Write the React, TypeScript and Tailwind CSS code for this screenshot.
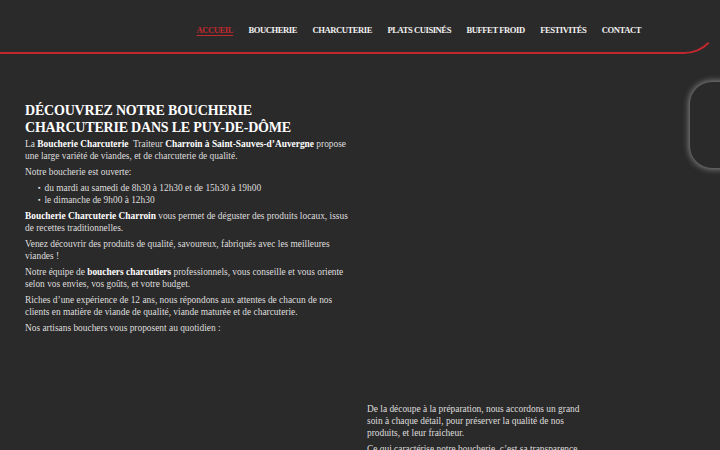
const navItems = [
  "ACCUEIL",
  "BOUCHERIE",
  "CHARCUTERIE",
  "PLATS CUISINÉS",
  "BUFFET FROID",
  "FESTIVITÉS",
  "CONTACT",
];

function Header() {
  return (
    <header className="h-[54px] w-full rounded-br-[36px] border-b-2 border-r-2 border-b-[#c1272d] border-r-transparent bg-[#2b2a2a]">
      <nav className="flex h-full items-center justify-end gap-[15.5px] pr-[77px] pt-[8px]">
        {navItems.map((item, i) => (
          <a
            key={item}
            href="#"
            className={
              i === 0
                ? "text-[8.6px] font-bold tracking-[-0.45px] text-[#c1272d] underline underline-offset-2"
                : "text-[8.6px] font-bold tracking-[-0.45px] text-[#f2f2f2]"
            }
          >
            {item}
          </a>
        ))}
      </nav>
    </header>
  );
}

export default function App() {
  return (
    <div
      className="relative h-[450px] w-[720px] overflow-hidden bg-[#2b2a2a] text-[9.4px] leading-[12px] text-[#dedede]"
      style={{ fontFamily: '"Liberation Serif", "DejaVu Serif", serif' }}
    >
      <Header />

      {/* decorative floating box at the right edge */}
      <div className="absolute right-[-30px] top-[82px] h-[86px] w-[60px] rounded-[22px] bg-[#2b2a2a] shadow-[0_0_6px_1px_rgba(200,200,200,0.6)]" />

      <main className="flex gap-[12px] px-[25px] pt-[49px]">
        <section className="flex w-[330px] flex-col gap-[4px]">
          <h1 className="mb-[-2px] text-[14px] font-bold leading-[16.5px] tracking-[-0.2px] text-white">
            DÉCOUVREZ NOTRE BOUCHERIE
            <br />
            CHARCUTERIE DANS LE PUY-DE-DÔME
          </h1>
          <p>
            La <b className="text-white">Boucherie Charcuterie</b>&nbsp; Traiteur{" "}
            <b className="text-white">Charroin à Saint-Sauves-d’Auvergne</b> propose une large
            variété de viandes, et de charcuterie de qualité.
          </p>
          <p>Notre boucherie est ouverte:</p>
          <ul className="pl-[20px]">
            <li className="flex gap-[4px]">
              <span className="-ml-[7px] text-[7px]">▪</span>du mardi au samedi de 8h30 à 12h30 et de
              15h30 à 19h00
            </li>
            <li className="flex gap-[4px]">
              <span className="-ml-[7px] text-[7px]">▪</span>le dimanche de 9h00 à 12h30
            </li>
          </ul>
          <p>
            <b className="text-white">Boucherie Charcuterie Charroin</b> vous permet de déguster des
            produits locaux, issus de recettes traditionnelles.
          </p>
          <p>
            Venez découvrir des produits de qualité, savoureux, fabriqués avec les meilleures
            viandes !
          </p>
          <p>
            Notre équipe de <b className="text-white">bouchers charcutiers</b> professionnels, vous
            conseille et vous oriente selon vos envies, vos goûts, et votre budget.
          </p>
          <p>
            Riches d’une expérience de 12 ans, nous répondons aux attentes de chacun de nos clients
            en matière de viande de qualité, viande maturée et de charcuterie.
          </p>
          <p>Nos artisans bouchers vous proposent au quotidien :</p>
        </section>

        <section className="flex w-[216px] flex-col gap-[4px] pt-[300px]">
          <p>
            De la découpe à la préparation, nous accordons un grand soin à chaque détail, pour
            préserver la qualité de nos produits, et leur fraicheur.
          </p>
          <p>
            Ce qui caractérise notre boucherie, c’est sa transparence et la traçabilité de ses
            produits.
          </p>
        </section>
      </main>
    </div>
  );
}
